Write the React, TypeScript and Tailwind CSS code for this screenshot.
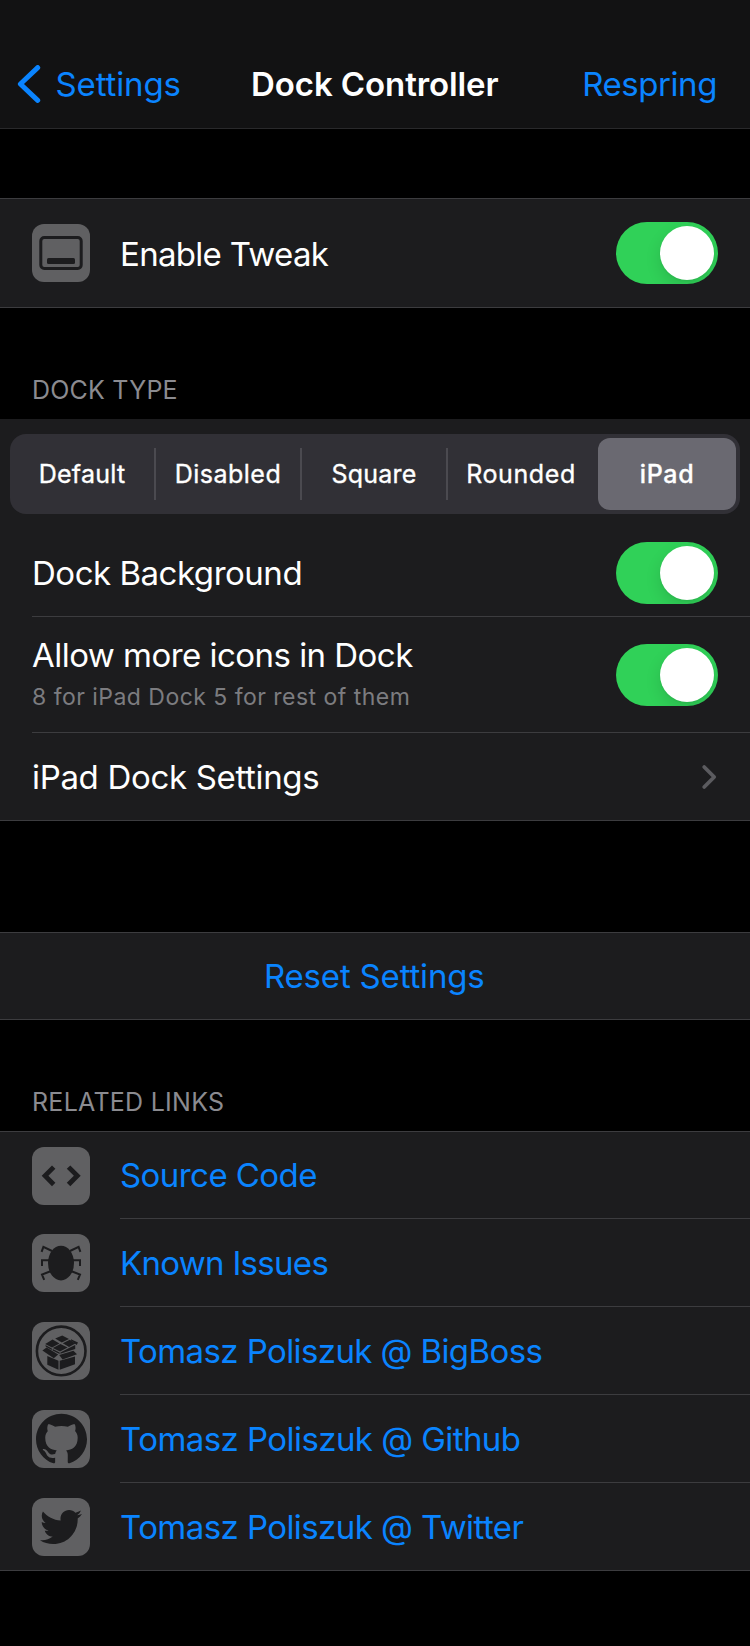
import type { ReactNode } from 'react';
import { FaTwitter } from 'react-icons/fa';
import { SiGithub } from 'react-icons/si';

function Toggle() {
  return (
    <button
      type="button"
      role="switch"
      aria-checked="true"
      className="flex h-[62px] w-[102px] shrink-0 items-center justify-end overflow-hidden rounded-full bg-[#30d158] p-1"
    >
      <span className="size-[54px] rounded-full bg-white shadow-[0_6px_16px_rgba(0,0,0,0.12),0_1px_2px_rgba(0,0,0,0.06)]" />
    </button>
  );
}

function IconTile({ children }: { children: ReactNode }) {
  return (
    <span className="mr-[31px] flex size-[58px] shrink-0 items-center justify-center rounded-[12px] bg-[#606062] text-[#1c1c1e]">
      {children}
    </span>
  );
}

function DockIcon() {
  return (
    <svg viewBox="0 0 58 58" className="size-[58px]" fill="none">
      <rect x="8.8" y="13.5" width="40.4" height="31" rx="3.5" stroke="currentColor" strokeWidth="3" />
      <rect x="15" y="34" width="28" height="6" rx="1.5" fill="currentColor" />
    </svg>
  );
}

function CodeIcon() {
  return (
    <svg viewBox="0 0 58 58" className="size-[58px]" fill="currentColor">
      <path d="M9.7 28.8 20 18.4l3.4 3.4-7 7 7 7-3.4 3.5z" />
      <path d="M48.7 28.8 38.3 18.4l-3.5 3.4 7.1 7-7.1 7 3.5 3.5z" />
    </svg>
  );
}

function BugIcon() {
  return (
    <svg viewBox="0 0 58 58" className="size-[58px]" fill="none" stroke="currentColor" strokeWidth="2">
      <ellipse cx="29" cy="29.1" rx="13" ry="17.3" fill="currentColor" stroke="none" />
      <path d="M9.6 17.8 11.4 12.8 20 17M10 32V26.3h7M12.2 45.8 10 40.6l8.5-3.4" />
      <path d="M48.4 17.8 46.6 12.8 38 17M48 32V26.3h-7M45.8 45.8 48 40.6l-8.5-3.4" />
    </svg>
  );
}

function PackageIcon() {
  return (
    <svg viewBox="0 0 58 58" className="size-[58px]" fill="currentColor">
      <circle cx="29.2" cy="28.9" r="24.3" fill="none" stroke="currentColor" strokeWidth="2.6" />
      <path d="M15.3 34 26.5 38.8V47.8L15.3 42.8z" />
      <path d="M27.7 38.8 43 34.6V42.2L27.7 47.8z" />
      <path d="M10.4 28.4 14.6 25.4 26.2 32.6 21.8 36.3z" />
      <path d="M27.2 32.9 41.4 28.8 45 32.2 30.6 37.4z" />
      <path d="M13.2 22 20.6 17.6 27.4 21.4 20 25.6z" />
      <path d="M13.4 23 19.8 26.5V28L13.8 24.8z" />
      <path d="M23.2 16.6 30.2 13.4 37 17 29.8 20.6z" />
      <path d="M30.8 21.2 37.8 17.8 43.4 21.4 37 24.9z" />
      <path d="M20.8 26 28.4 22.1 35.6 25.6 28 29.5z" />
      <path d="M20.6 27 27.6 30.4V32L20.6 28.6z" />
      <path d="M28.4 30.4 36 26.6 43.2 23V27L28.4 31.8z" />
      <path d="M39 17.2 46 20.6 44.6 23 39 18.6z" />
    </svg>
  );
}

function Row({
  icon,
  label,
  className,
}: {
  icon: ReactNode;
  label: string;
  className: string;
}) {
  return (
    <a href="#" className="flex items-center pl-8">
      <IconTile>{icon}</IconTile>
      <span
        className={`-ml-px flex flex-1 items-center text-[33px] leading-10 text-[#0a84ff] ${className}`}
      >
        {label}
      </span>
    </a>
  );
}

function GroupTitle({ children, className }: { children: string; className: string }) {
  return (
    <h2 className={`flex items-end pl-8 text-[25px] leading-[30px] text-[#8b8b90] ${className}`}>
      {children}
    </h2>
  );
}

const segments = [
  { label: 'Default', style: 'tracking-[0.25px] border-r-2 border-[#4b4a50]' },
  { label: 'Disabled', style: 'tracking-[0.48px] border-r-2 border-[#4b4a50]' },
  { label: 'Square', style: 'tracking-[0.2px] border-r-2 border-[#4b4a50]' },
  { label: 'Rounded', style: 'tracking-[0.6px]' },
];

export default function App() {
  return (
    <div className="min-h-[1646px] w-[750px] overflow-hidden bg-black font-['Inter',sans-serif] text-white antialiased">
      <header className="flex h-[129px] items-end border-b border-[#29292b] bg-[#121213] text-[33px] leading-10">
        <div className="flex h-[88px] w-full items-center pr-[33px] pl-[17px]">
          <a href="#" className="flex w-[234px] items-center tracking-[-0.13px] text-[#0a84ff]">
            <svg viewBox="0 0 24 38" className="mr-[14.5px] h-[38px] w-6" fill="none">
              <path
                d="M20.7 2.6 3.4 19 20.7 35.4"
                stroke="currentColor"
                strokeWidth="5"
                strokeLinecap="round"
                strokeLinejoin="round"
              />
            </svg>
            Settings
          </a>
          <h1 className="font-semibold tracking-[-0.09px]">Dock Controller</h1>
          <div className="flex flex-1 justify-end">
            <a href="#" className="tracking-[-0.43px] text-[#0a84ff]">
              Respring
            </a>
          </div>
        </div>
      </header>

      <section className="mt-[69px] flex h-[110px] items-center border-y border-[#3c3c3f] bg-[#1c1c1e] px-8">
        <IconTile>
          <DockIcon />
        </IconTile>
        <span className="-ml-px flex-1 pt-0.5 text-[33px] leading-10 tracking-[-0.69px]">
          Enable Tweak
        </span>
        <Toggle />
      </section>

      <GroupTitle className="h-[97px] tracking-[0.22px]">DOCK TYPE</GroupTitle>

      <section className="mt-[14px] border-b border-[#3c3c3f] bg-[#1c1c1e] pt-[15px]">
        <div className="mx-[10px] flex h-20 rounded-[16px] bg-[#313036] text-[25px]">
          {segments.map((s) => (
            <button
              key={s.label}
              type="button"
              className={`my-[14px] w-[146px] pt-0.5 text-center [-webkit-text-stroke:0.35px_white] ${s.style}`}
            >
              {s.label}
            </button>
          ))}
          <div className="w-[146px] p-1">
            <button
              type="button"
              className="size-full rounded-[12px] bg-[#6a6971] pt-0.5 text-center font-medium tracking-[0.7px] [-webkit-text-stroke:0.3px_white]"
            >
              iPad
            </button>
          </div>
        </div>

        <div className="mt-4 ml-8 flex h-[87px] items-center border-b border-[#3c3c3f] pr-8">
          <span className="flex-1 text-[33px] leading-10 tracking-[-0.48px]">Dock Background</span>
          <Toggle />
        </div>
        <div className="ml-8 flex h-[116px] items-center border-b border-[#3c3c3f] pr-8">
          <div className="flex-1">
            <p className="text-[33px] leading-[44px] tracking-[-0.53px]">
              Allow more icons in Dock
            </p>
            <p className="text-[23px] leading-10 tracking-[0.47px] text-[#7c7c80]">
              8 for iPad Dock 5 for rest of them
            </p>
          </div>
          <Toggle />
        </div>
        <a href="#" className="ml-8 flex h-[87px] items-center pr-8">
          <span className="flex-1 text-[33px] leading-10 tracking-[-0.33px]">
            iPad Dock Settings
          </span>
          <svg viewBox="0 0 18 26" className="h-[26px] w-[18px]" fill="none">
            <path
              d="M4.2 3 14.2 13 4.2 23"
              stroke="#5b5b5f"
              strokeWidth="3.8"
              strokeLinecap="round"
              strokeLinejoin="round"
            />
          </svg>
        </a>
      </section>

      <section className="mt-[111px] flex h-[88px] items-center justify-center border-y border-[#3c3c3f] bg-[#1c1c1e] pr-[1.5px]">
        <a href="#" className="text-[33px] leading-10 tracking-[-0.18px] text-[#0a84ff]">
          Reset Settings
        </a>
      </section>

      <GroupTitle className="h-[97px] tracking-[0.26px]">RELATED LINKS</GroupTitle>

      <section className="mt-[14px] border-y border-[#3c3c3f] bg-[#1c1c1e]">
        <Row
          icon={<CodeIcon />}
          label="Source Code"
          className="h-[87px] border-b border-[#3c3c3f] tracking-[-0.56px]"
        />
        <Row
          icon={<BugIcon />}
          label="Known Issues"
          className="h-[88px] border-b border-[#3c3c3f] tracking-[-0.7px]"
        />
        <Row
          icon={<PackageIcon />}
          label="Tomasz Poliszuk @ BigBoss"
          className="h-[88px] border-b border-[#3c3c3f] tracking-[-0.6px]"
        />
        <Row
          icon={<SiGithub className="mb-0.5 size-[51px]" />}
          label="Tomasz Poliszuk @ Github"
          className="h-[88px] border-b border-[#3c3c3f] tracking-[-0.56px]"
        />
        <Row
          icon={<FaTwitter className="size-[42px]" />}
          label="Tomasz Poliszuk @ Twitter"
          className="h-[87px] tracking-[-0.57px]"
        />
      </section>
    </div>
  );
}
